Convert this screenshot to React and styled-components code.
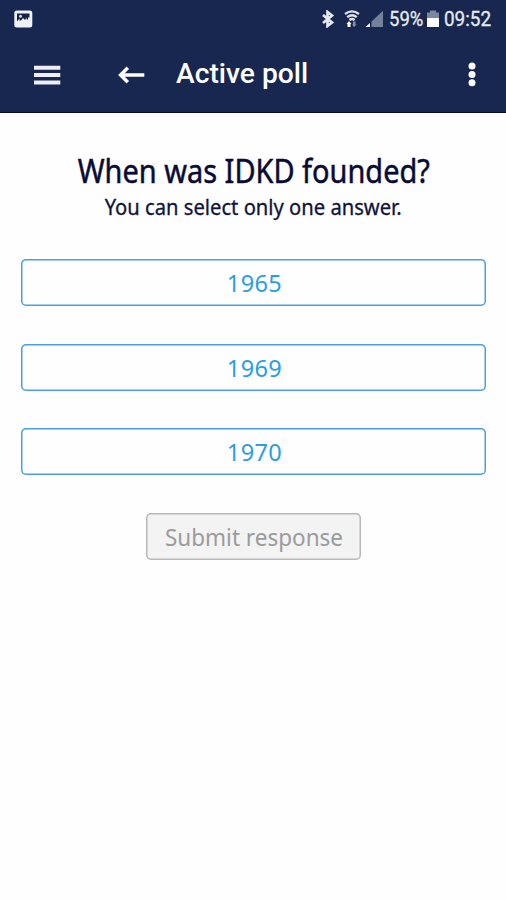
import React from 'react';
import styled, { createGlobalStyle } from 'styled-components';

const GlobalStyle = createGlobalStyle`
  * { box-sizing: border-box; }
  body { margin: 0; background: #fefefe; }
  button { font: inherit; margin: 0; }
`;

const Screen = styled.div`
  width: 506px;
  height: 900px;
  overflow: hidden;
  background: #fefefe;
  font-family: 'Noto Sans', sans-serif;
`;

const Header = styled.header`
  height: 113px;
  background: #17274f;
  border-bottom: 1px solid #080d29;
  color: #fff;
  font-family: Roboto, sans-serif;
`;

const StatusBar = styled.div`
  height: 37px;
  display: flex;
  align-items: center;
  justify-content: space-between;
  padding: 0 15px 0 14px;
  svg { display: block; }
`;

const StatusGroup = styled.div`
  display: flex;
  align-items: center;
`;

const StatusText = styled.span`
  width: ${(p) => p.$width}px;
  margin-left: ${(p) => p.$gap}px;
  padding-top: 1px;
  font-size: 21px;
  line-height: 37px;
  color: #e9ebf2;
  -webkit-text-stroke: 0.3px #e9ebf2;
  white-space: nowrap;
`;

const Fitted = styled.span`
  display: inline-block;
  white-space: nowrap;
  transform: scaleX(${(p) => p.$scale});
  transform-origin: ${(p) => p.$origin || 'center'};
`;

const Toolbar = styled.div`
  height: 75px;
  display: flex;
  align-items: center;
  padding: 0 30px 0 34px;
`;

const IconButton = styled.button`
  display: flex;
  padding: 0;
  border: 0;
  background: none;
  color: #fff;
  margin-right: ${(p) => p.$after || 0}px;
`;

const Title = styled.h1`
  flex: 1;
  margin: -2px 0 0;
  font-size: 28px;
  line-height: 36px;
  font-weight: 500;
`;

const Poll = styled.main`
  display: flex;
  flex-direction: column;
  align-items: center;
  padding: 38px 20px 0 21px;
`;

const Question = styled.h2`
  margin: 0;
  color: #090b35;
  font-size: 33px;
  line-height: 40px;
  font-weight: 400;
  -webkit-text-stroke: 0.5px #090b35;
`;

const Hint = styled.p`
  margin: 2px 0 0;
  color: #11133b;
  font-size: 21.5px;
  line-height: 28px;
  font-weight: 400;
  -webkit-text-stroke: 0.3px #11133b;
`;

const Options = styled.div`
  align-self: stretch;
  display: grid;
  gap: 37.5px;
  margin: 38px 0;
`;

const Option = styled.button`
  height: 47px;
  padding: 2px 0 0 2px;
  border: 0;
  box-shadow: inset 0 0 0 1.5px #4a9fdc;
  border-radius: 5px;
  background: #fefefe;
  color: #2a9fdc;
  font-size: 23.5px;
  letter-spacing: 0.4px;
  line-height: 45px;
`;

const Submit = styled.button`
  width: 215px;
  height: 47px;
  padding: 1px 0 0;
  border: 0;
  box-shadow: inset 0 0 0 1.5px #b9b9b9;
  border-radius: 5px;
  background: #f3f3f3;
  color: #9b9b9b;
  font-size: 23.5px;
  line-height: 47px;
  display: flex;
  justify-content: center;
`;

const PictureIcon = () => (
  <svg width="19" height="18" viewBox="0 0 19 18">
    <rect x="0.3" y="0.5" width="18" height="17" rx="2.5" fill="#f1f2f7" />
    <path d="M3 3.5H15.5V7.5H14V9.5H12.5V7.5L11 10 9 8 7 10.5H5.5V8.5L3 11.5Z" fill="#17234a" />
    <circle cx="6.5" cy="6.2" r="1.5" fill="#d4d7e2" />
  </svg>
);

const BluetoothIcon = () => (
  <svg width="14" height="18" viewBox="0 0 14 18">
    <path d="M2 5L11 12.5 6.5 16V2L11 5.5 2 13" fill="none" stroke="#e6e8f0" strokeWidth="2.7" />
  </svg>
);

const WifiIcon = () => (
  <svg width="16" height="18" viewBox="0 0 16 18">
    <g fill="none" stroke="#dfe2ec" strokeWidth="2.3">
      <path d="M1 4Q8-1.2 15 4" />
      <path d="M3.2 7.1Q8 3.5 12.8 7.1" />
      <path d="M5.4 10Q8 8 10.6 10" />
    </g>
    <path d="M5 11L7.5 14H6.5V17H3.5V14H2.5Z" fill="#fff" />
    <path d="M10 17L8 14.5H9V11.5H11.5V14.5H12.5Z" fill="#8792a9" />
  </svg>
);

const SignalIcon = () => (
  <svg width="19" height="18" viewBox="0 0 19 18">
    <path d="M6.5 17V11.5L18 .8V17Z" fill="#74819a" />
    <path d="M.5 17L5 13V17Z" fill="#fff" />
  </svg>
);

const BatteryIcon = () => (
  <svg width="12" height="18" viewBox="0 0 12 18">
    <path d="M0 2.5H3V.5H9V2.5H12V8H0Z" fill="#7b879e" />
    <path d="M0 8H12V17H0Z" fill="#fff" />
  </svg>
);

const MenuIcon = () => (
  <svg width="27" height="20" viewBox="0 0 27 20">
    <path d="M0 2.7H26.3M0 10H26.3M0 17.4H26.3" stroke="#eeeef4" strokeWidth="4" />
  </svg>
);

const BackIcon = () => (
  <svg width="27" height="18" viewBox="0 0 27 18">
    <path d="M9.8 1.8L2.6 9 9.8 16.2M2.6 9H26.3" fill="none" stroke="#fff" strokeWidth="3.5" />
  </svg>
);

const MoreIcon = () => (
  <svg width="8" height="25" viewBox="0 0 8 25">
    <g fill="#fff">
      <circle cx="4" cy="4" r="3.5" />
      <circle cx="4" cy="12.4" r="3.5" />
      <circle cx="4" cy="20.8" r="3.5" />
    </g>
  </svg>
);

const Icons = styled.div`
  display: flex;
  gap: ${(p) => p.$gap}px;
  margin-right: ${(p) => p.$after}px;
`;

const BatterySpace = styled.span`
  padding-left: 4px;
`;

const YEARS = ['1965', '1969', '1970'];

export default function App() {
  return (
    <Screen>
      <GlobalStyle />
      <Header>
        <StatusBar>
          <PictureIcon />
          <StatusGroup>
            <Icons $gap={9} $after={5}>
              <BluetoothIcon />
              <WifiIcon />
            </Icons>
            <SignalIcon />
            <StatusText $width={34} $gap={5}>
              <Fitted $scale={0.88} $origin="left">59%</Fitted>
            </StatusText>
            <Icons $gap={0} $after={5}>
              <BatterySpace><BatteryIcon /></BatterySpace>
            </Icons>
            <StatusText $width={47} $gap={0}>
              <Fitted $scale={0.9} $origin="left">09:52</Fitted>
            </StatusText>
          </StatusGroup>
        </StatusBar>
        <Toolbar>
          <IconButton $after={57} aria-label="Menu"><MenuIcon /></IconButton>
          <IconButton $after={31} aria-label="Back"><BackIcon /></IconButton>
          <Title><Fitted $scale={1.008} $origin="left">Active poll</Fitted></Title>
          <IconButton aria-label="More options"><MoreIcon /></IconButton>
        </Toolbar>
      </Header>
      <Poll>
        <Question><Fitted $scale={0.877}>When was IDKD founded?</Fitted></Question>
        <Hint><Fitted $scale={0.939}>You can select only one answer.</Fitted></Hint>
        <Options>
          {YEARS.map((year) => <Option key={year}>{year}</Option>)}
        </Options>
        <Submit disabled><Fitted $scale={0.958}>Submit response</Fitted></Submit>
      </Poll>
    </Screen>
  );
}
